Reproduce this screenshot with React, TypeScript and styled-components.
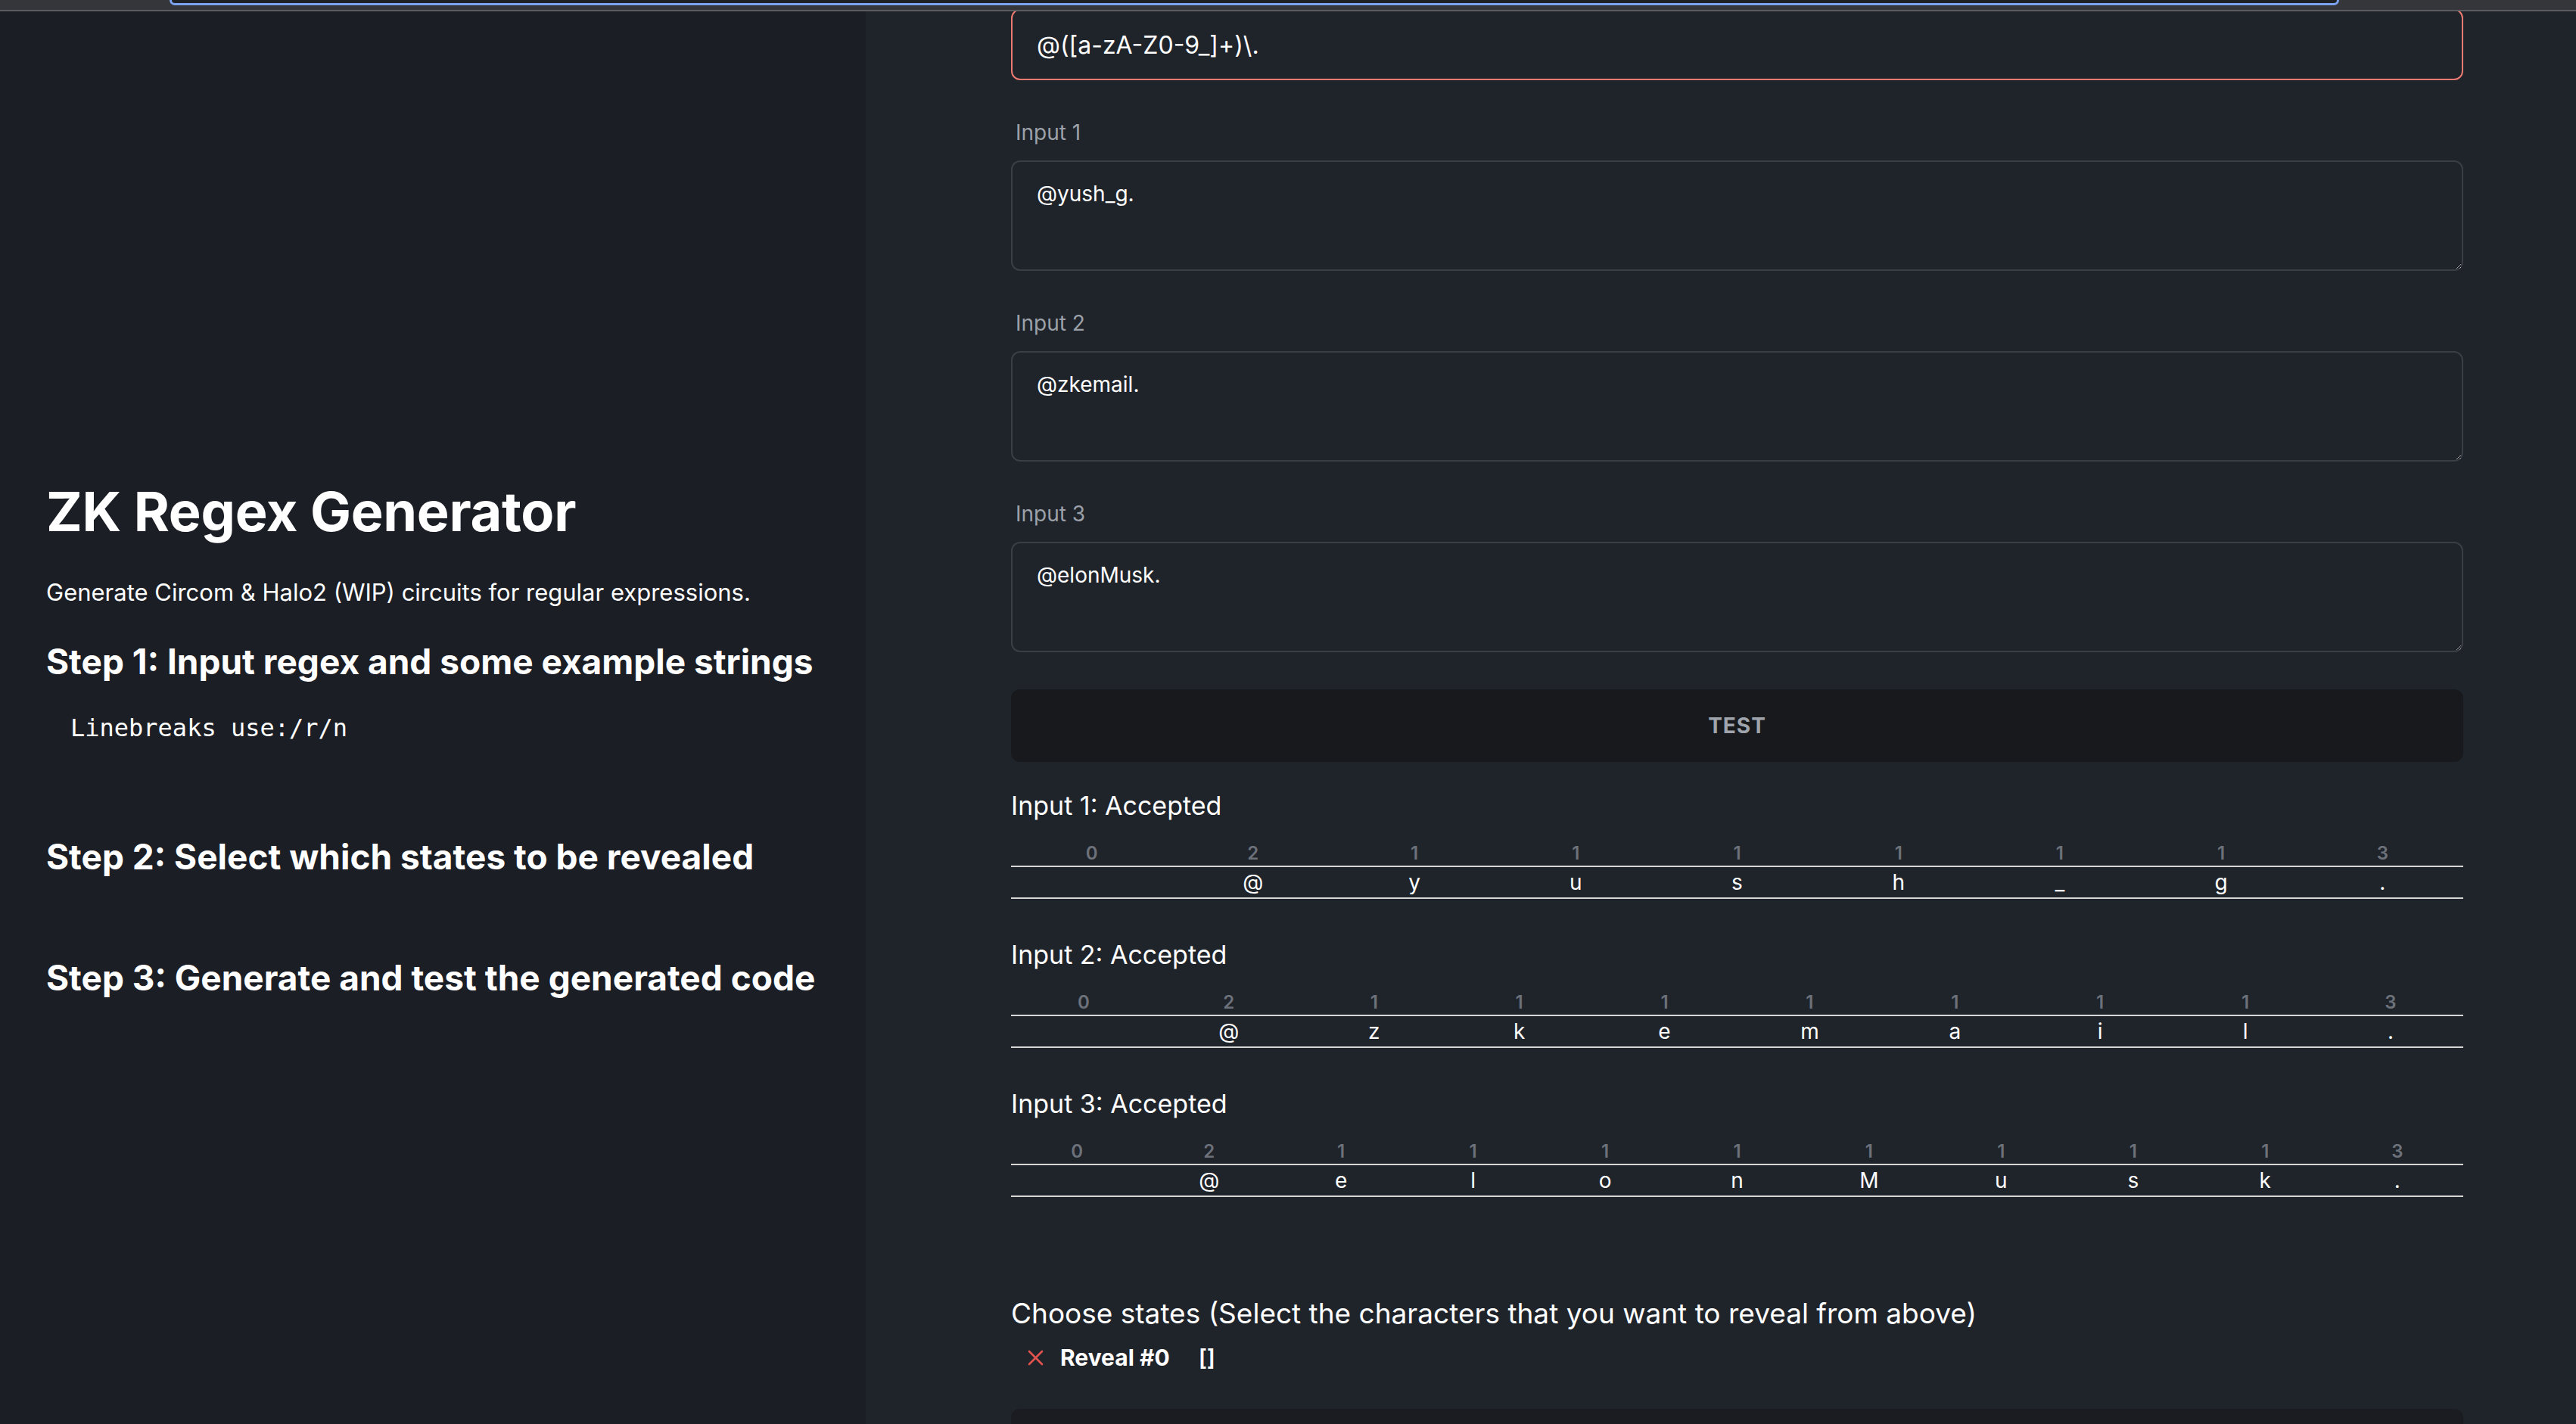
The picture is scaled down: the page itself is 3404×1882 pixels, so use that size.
import React from 'react';
import styled, { createGlobalStyle } from 'styled-components';

const GlobalStyle = createGlobalStyle`
  html, body {
    margin: 0;
    padding: 0;
    background: #1f232a;
  }
  body {
    font-family: Inter, "Noto Sans", sans-serif;
    color: #ffffff;
  }
  * {
    box-sizing: border-box;
  }
`;

const Page = styled.div`
  width: 3404px;
  height: 1882px;
  display: flex;
  flex-direction: column;
  overflow: hidden;
`;

const BrowserBar = styled.div`
  flex: none;
  height: 15px;
  background: #35363a;
  border-bottom: 2px solid #5b5c60;
  padding-left: 224px;
`;

const Omnibox = styled.div`
  width: 2867px;
  height: 7px;
  background: #202124;
  border: 3px solid #7ba2ef;
  border-top: none;
  border-radius: 0 0 10px 10px;
`;

const Body = styled.div`
  flex: 1;
  min-height: 0;
  display: flex;
`;

const Sidebar = styled.aside`
  flex: none;
  width: 1144px;
  background: #1b1e24;
  padding: 618px 40px 0 61px;
`;

const Title = styled.h1`
  margin: 0;
  font-size: 72px;
  line-height: 1.2;
  font-weight: 700;
  letter-spacing: -0.3px;
`;

const Lead = styled.p`
  margin: 40px 0 0;
  font-size: 31px;
  line-height: 48px;
`;

const StepHeading = styled.h2<{ $gap: number }>`
  margin: ${(p) => p.$gap}px 0 0;
  font-size: 46px;
  line-height: 54px;
  font-weight: 700;
`;

const Hint = styled.pre`
  margin: 37px 0 0;
  padding-left: 32px;
  font-family: "DejaVu Sans Mono", "Liberation Mono", monospace;
  font-size: 32px;
  line-height: 48px;
`;

const Main = styled.main`
  flex: 1;
  min-width: 0;
  overflow: hidden;
  padding: 0 149px 0 192px;
`;

const Column = styled.div`
  margin-top: -3px;
  display: flex;
  flex-direction: column;
`;

const RegexInput = styled.input`
  display: block;
  width: 100%;
  height: 94px;
  padding: 0 32px;
  border: 2px solid #eb7a72;
  border-radius: 12px;
  background: transparent;
  color: #ffffff;
  font-family: inherit;
  font-size: 32px;
  outline: none;
`;

const Field = styled.div`
  margin-top: 48px;
  display: flex;
  flex-direction: column;
`;

const FieldLabel = styled.label`
  padding-left: 6px;
  margin-bottom: 16px;
  font-size: 28px;
  line-height: 42px;
  color: #9ca1a9;
`;

const TextArea = styled.textarea`
  display: block;
  width: 100%;
  height: 146px;
  padding: 21px 32px;
  border: 2px solid #3a3e45;
  border-radius: 12px;
  background: transparent;
  color: #ffffff;
  font-family: inherit;
  font-size: 28px;
  line-height: 42px;
  resize: vertical;
  outline: none;
`;

const TestButton = styled.button`
  margin-top: 49px;
  height: 96px;
  border: none;
  border-radius: 12px;
  background: #17191d;
  color: #a0a5ad;
  font-family: inherit;
  font-size: 28px;
  font-weight: 700;
  letter-spacing: 1px;
`;

const Result = styled.section<{ $first?: boolean }>`
  margin-top: ${(p) => (p.$first ? 34 : 50)}px;
`;

const ResultTitle = styled.h3`
  margin: 0;
  font-size: 34px;
  line-height: 48px;
  font-weight: 400;
`;

const StateTable = styled.table`
  margin-top: 23px;
  width: 100%;
  table-layout: fixed;
  border-collapse: separate;
  border-spacing: 0;
`;

const StateCell = styled.th`
  padding: 0;
  font-size: 24px;
  line-height: 32px;
  font-weight: 600;
  color: #6c717a;
  text-align: center;
  border-bottom: 2px solid #d6d6d6;
`;

const CharCell = styled.td`
  padding: 0;
  font-size: 28px;
  line-height: 40px;
  text-align: center;
  border-bottom: 2px solid #d6d6d6;
`;

const ChooseTitle = styled.h3`
  margin: 127px 0 0;
  font-size: 37px;
  line-height: 54px;
  font-weight: 400;
`;

const RevealRow = styled.div`
  margin-top: 10px;
  padding-left: 22px;
  display: flex;
  align-items: center;
  font-size: 30px;
  line-height: 42px;
`;

const RevealLabel = styled.span`
  margin-left: 22px;
  font-weight: 700;
`;

const RevealValue = styled.span`
  margin-left: 38px;
  font-weight: 600;
`;

const PanelStub = styled.div`
  margin-top: 47px;
  height: 100px;
  border-radius: 12px;
  background: #1a1c21;
`;

const DismissIcon = () => (
  <svg width="21" height="21" viewBox="0 0 21 21" fill="none">
    <path d="M2 2L19 19M19 2L2 19" stroke="#e2534f" strokeWidth="2.6" strokeLinecap="round" />
  </svg>
);

type Sample = {
  value: string;
  states: number[];
};

const samples: Sample[] = [
  { value: '@yush_g.', states: [0, 2, 1, 1, 1, 1, 1, 1, 3] },
  { value: '@zkemail.', states: [0, 2, 1, 1, 1, 1, 1, 1, 1, 3] },
  { value: '@elonMusk.', states: [0, 2, 1, 1, 1, 1, 1, 1, 1, 1, 3] },
];

const App: React.FC = () => {
  return (
    <>
      <GlobalStyle />
      <Page>
        <BrowserBar>
          <Omnibox />
        </BrowserBar>
        <Body>
          <Sidebar>
            <Title>ZK Regex Generator</Title>
            <Lead>Generate Circom &amp; Halo2 (WIP) circuits for regular expressions.</Lead>
            <StepHeading $gap={40}>Step 1: Input regex and some example strings</StepHeading>
            <Hint>Linebreaks use:/r/n</Hint>
            <StepHeading $gap={119}>Step 2: Select which states to be revealed</StepHeading>
            <StepHeading $gap={106}>Step 3: Generate and test the generated code</StepHeading>
          </Sidebar>
          <Main>
            <Column>
              <RegexInput readOnly value={'@([a-zA-Z0-9_]+)\\.'} />
              {samples.map((s, i) => (
                <Field key={i}>
                  <FieldLabel>Input {i + 1}</FieldLabel>
                  <TextArea readOnly value={s.value} />
                </Field>
              ))}
              <TestButton>TEST</TestButton>
              {samples.map((s, i) => (
                <Result key={i} $first={i === 0}>
                  <ResultTitle>Input {i + 1}: Accepted</ResultTitle>
                  <StateTable>
                    <thead>
                      <tr>
                        {s.states.map((st, j) => (
                          <StateCell key={j}>{st}</StateCell>
                        ))}
                      </tr>
                    </thead>
                    <tbody>
                      <tr>
                        {s.states.map((_, j) => (
                          <CharCell key={j}>{j === 0 ? '' : s.value[j - 1]}</CharCell>
                        ))}
                      </tr>
                    </tbody>
                  </StateTable>
                </Result>
              ))}
              <ChooseTitle>Choose states (Select the characters that you want to reveal from above)</ChooseTitle>
              <RevealRow>
                <DismissIcon />
                <RevealLabel>Reveal #0</RevealLabel>
                <RevealValue>[]</RevealValue>
              </RevealRow>
              <PanelStub />
            </Column>
          </Main>
        </Body>
      </Page>
    </>
  );
};

export default App;
